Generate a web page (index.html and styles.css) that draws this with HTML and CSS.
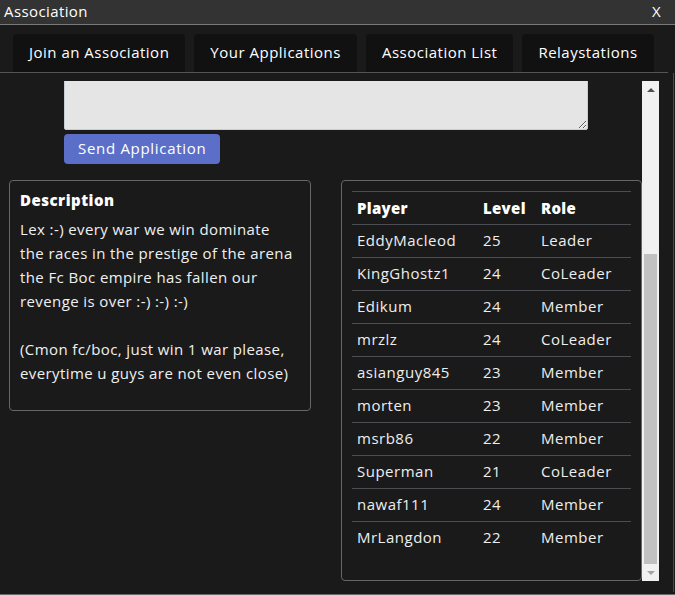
FILE: index.html
```html
<!DOCTYPE html>
<html lang="en">
<head>
<meta charset="utf-8">
<title>Association</title>
<link rel="stylesheet" href="styles.css">
</head>
<body>
<div class="window">
  <header class="titlebar">
    <span class="title">Association</span>
    <span class="close">X</span>
  </header>
  <nav class="tabs">
    <button class="tab">Join an Association</button>
    <button class="tab">Your Applications</button>
    <button class="tab">Association List</button>
    <button class="tab">Relaystations</button>
  </nav>
  <div class="body">
    <div class="viewport">
      <div class="content">
        <div class="apply">
          <textarea class="message"></textarea>
          <button class="send">Send Application</button>
        </div>
        <div class="columns">
          <section class="card desc">
            <h3 class="card-title">Description</h3>
            <p class="desc-text">Lex :-) every war we win dominate<br>the races in the prestige of the arena<br>the Fc Boc empire has fallen our<br>revenge is over :-) :-) :-)<br><br>(Cmon fc/boc, just win 1 war please,<br>everytime u guys are not even close)</p>
          </section>
          <section class="card members">
            <table class="roster">
              <thead>
                <tr><th class="c-player">Player</th><th class="c-level">Level</th><th class="c-role">Role</th></tr>
              </thead>
              <tbody>
                <tr><td>EddyMacleod</td><td>25</td><td>Leader</td></tr>
                <tr><td>KingGhostz1</td><td>24</td><td>CoLeader</td></tr>
                <tr><td>Edikum</td><td>24</td><td>Member</td></tr>
                <tr><td>mrzlz</td><td>24</td><td>CoLeader</td></tr>
                <tr><td>asianguy845</td><td>23</td><td>Member</td></tr>
                <tr><td>morten</td><td>23</td><td>Member</td></tr>
                <tr><td>msrb86</td><td>22</td><td>Member</td></tr>
                <tr><td>Superman</td><td>21</td><td>CoLeader</td></tr>
                <tr><td>nawaf111</td><td>24</td><td>Member</td></tr>
                <tr><td>MrLangdon</td><td>22</td><td>Member</td></tr>
              </tbody>
            </table>
          </section>
        </div>
      </div>
    </div>
    <div class="scrollbar">
      <div class="sb-btn"><span class="arrow-up"></span></div>
      <div class="sb-track"><div class="sb-thumb"></div></div>
      <div class="sb-btn"><span class="arrow-down"></span></div>
    </div>
  </div>
  <div class="footer-line"></div>
</div>
</body>
</html>
```

FILE: styles.css
```css
* { box-sizing: border-box; }

html, body {
  margin: 0;
  padding: 0;
  background: #1a1a1a;
}

body {
  font-family: "Open Sans", "DejaVu Sans", sans-serif;
  font-size: 15px;
  letter-spacing: 0.5px;
  color: #f2f2f2;
  width: 675px;
  height: 595px;
  overflow: hidden;
}

.window {
  width: 675px;
  height: 595px;
  display: flex;
  flex-direction: column;
  background: #1a1a1a;
}

.titlebar {
  height: 25px;
  background: #333333;
  border-bottom: 1px solid #7a7a7a;
  display: flex;
  align-items: center;
  justify-content: space-between;
  padding: 0 14px 2px 4px;
  color: #ffffff;
  font-size: 15px;
  letter-spacing: 0.4px;
}

.tabs {
  display: flex;
  gap: 9px;
  padding: 9px 0 0 13px;
  margin-right: 7px;
  height: 48px;
  border-bottom: 1px solid #555555;
}

.tab {
  font-family: inherit;
  font-size: 15px;
  letter-spacing: 0.5px;
  color: #ffffff;
  background: #111111;
  border: none;
  border-radius: 4px 4px 0 0;
  padding: 0 16px 2px;
  height: 38px;
  cursor: pointer;
}

.body {
  display: flex;
  align-items: flex-start;
  padding-top: 8px;
  border-right: 1px solid #4a4a4a;
  margin-right: 1px;
  height: 519px;
}

.viewport {
  width: 642px;
  height: 500px;
  overflow: hidden;
}

.content {
  margin-top: -52px;
}

.apply {
  padding-left: 64px;
  display: flex;
  flex-direction: column;
  align-items: flex-start;
}

.message {
  width: 524px;
  height: 101px;
  background: #e5e5e5;
  border: 1px solid #c8ccd4;
  border-radius: 0 0 2px 2px;
  margin: 0;
  display: block;
  resize: vertical;
}

.send {
  margin-top: 4px;
  height: 30px;
  padding: 0 14px 3px;
  background: #5b6fc8;
  color: #ffffff;
  border: none;
  border-radius: 4px;
  font-family: inherit;
  font-size: 15px;
  letter-spacing: 0.7px;
}

.columns {
  display: flex;
  align-items: flex-start;
  margin-top: 16px;
  padding-left: 9px;
  gap: 30px;
}

.card {
  border: 1px solid #666666;
  border-radius: 4px;
}

.desc {
  width: 302px;
  padding: 7px 10px 25px 10px;
}

.card-title {
  margin: 0;
  font-size: 15px;
  font-weight: 800;
  line-height: 24px;
  color: #ffffff;
}

.desc-text {
  margin: 5px 0 0;
  line-height: 24px;
  color: #f0f0f0;
  letter-spacing: 0.4px;
  white-space: nowrap;
}

.members {
  width: 301px;
  height: 401px;
  padding: 10px 10px 0 10px;
}

.roster {
  width: 100%;
  border-collapse: collapse;
}

.roster th,
.roster td {
  border-top: 1px solid #4a4d52;
  height: 33px;
  padding: 0 5px 2px;
  text-align: left;
  font-size: 15px;
}

.roster th {
  font-weight: 800;
  color: #ffffff;
  letter-spacing: 0.3px;
  padding-bottom: 0;
}

.roster td {
  color: #eeeeee;
}

.c-player { width: 126px; }
.c-level { width: 58px; }

.scrollbar {
  width: 17px;
  height: 500px;
  background: #f1f1f1;
  display: flex;
  flex-direction: column;
}

.sb-btn {
  height: 17px;
  display: flex;
  align-items: center;
  justify-content: center;
}

.arrow-up {
  width: 0;
  height: 0;
  border-left: 4px solid transparent;
  border-right: 4px solid transparent;
  border-bottom: 4px solid #505050;
}

.arrow-down {
  width: 0;
  height: 0;
  border-left: 4px solid transparent;
  border-right: 4px solid transparent;
  border-top: 4px solid #a3a3a3;
}

.sb-track {
  flex: 1;
  display: flex;
  flex-direction: column;
  justify-content: flex-end;
  padding: 0 2px;
}

.sb-thumb {
  height: 310px;
  background: #c1c1c1;
}

.footer-line {
  height: 1px;
  background: #6a6a6a;
  margin-top: 2px;
}
```
